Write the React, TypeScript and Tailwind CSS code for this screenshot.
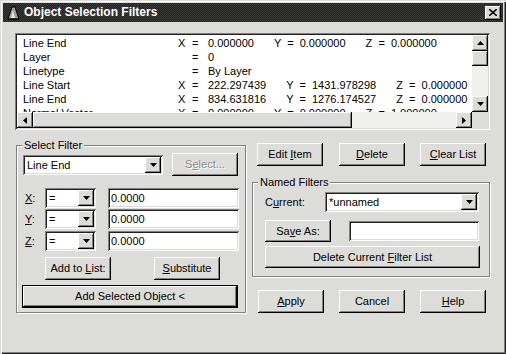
import type { ReactNode } from "react";

const raised =
  "bg-[#dcdcd8] shadow-[inset_-1px_-1px_0_#000,inset_1px_1px_0_#fff,inset_-2px_-2px_0_#808080]";
const sunken =
  "bg-white shadow-[inset_1px_1px_0_#808080,inset_-1px_-1px_0_#fff,inset_2px_2px_0_#202020,inset_-2px_-2px_0_#dcdcd8]";

interface Row {
  label: string;
  x?: string;
  v?: string;
  y?: string;
  z?: string;
}

const rows: Row[] = [
  { label: "Line End", x: "0.000000", y: "0.000000", z: "0.000000" },
  { label: "Layer", v: "0" },
  { label: "Linetype", v: "By Layer" },
  { label: "Line Start", x: "222.297439", y: "1431.978298", z: "0.000000" },
  { label: "Line End", x: "834.631816", y: "1276.174527", z: "0.000000" },
  { label: "Normal Vector", x: "0.000000", y: "0.000000", z: "1.000000" },
];

function Btn({ children, className = "" }: { children: ReactNode; className?: string }) {
  return (
    <div className={`flex items-center justify-center ${raised} ${className}`}>
      {children}
    </div>
  );
}

function Arrow({ dir }: { dir: "up" | "down" | "left" | "right" }) {
  const pts = {
    up: "0,4 7,4 3.5,0",
    down: "0,0 7,0 3.5,4",
    left: "4,0 4,7 0,3.5",
    right: "0,0 0,7 4,3.5",
  }[dir];
  const w = dir === "up" || dir === "down" ? 7 : 4;
  const h = dir === "up" || dir === "down" ? 4 : 7;
  return (
    <svg width={w} height={h} viewBox={`0 0 ${w} ${h}`}>
      <polygon points={pts} fill="#000" />
    </svg>
  );
}

function ArrowBtn({ dir }: { dir: "up" | "down" | "left" | "right" }) {
  return (
    <Btn className="w-[16px] h-[16px] shrink-0">
      <Arrow dir={dir} />
    </Btn>
  );
}

function Combo({ value, className = "" }: { value: string; className?: string }) {
  return (
    <div className={`flex items-center p-[2px] h-[20px] ${sunken} ${className}`}>
      <span className="flex-1 pl-[2px] leading-[16px]">{value}</span>
      <ArrowBtn dir="down" />
    </div>
  );
}

function Field({ value = "", className = "" }: { value?: string; className?: string }) {
  return (
    <div className={`flex items-center h-[20px] px-[3px] ${sunken} ${className}`}>
      {value}
    </div>
  );
}

function Group({ title, children, className = "" }: { title: string; children: ReactNode; className?: string }) {
  return (
    <div
      className={`relative border border-[#808080] shadow-[inset_1px_1px_0_#fff,1px_1px_0_#fff] ${className}`}
    >
      <span className="absolute -top-[8px] left-[5px] px-[2px] bg-[#dcdcd8] leading-[14px]">
        {title}
      </span>
      {children}
    </div>
  );
}

function ListBox() {
  return (
    <div className={`flex w-[475px] h-[97px] p-[2px] ${sunken}`}>
      <div className="flex flex-col flex-1 min-w-0">
        <div className="flex-1 overflow-hidden pl-[6px] pt-[1px]">
          {rows.map((r, i) => (
            <div key={i} className="flex h-[14px] items-center whitespace-pre leading-[14px]">
              <span className="w-[155px] shrink-0">{r.label}</span>
              <span className="w-[14px] shrink-0">{r.x ? "X" : ""}</span>
              <span className="w-[16px] shrink-0">=</span>
              <span>{r.x ?? r.v}</span>
              {r.y && <span className="ml-[20px]">{"Y  =  " + r.y}</span>}
              {r.z && <span className="ml-[20px]">{"Z  =  " + r.z}</span>}
            </div>
          ))}
        </div>
        <div className="flex h-[16px]">
          <ArrowBtn dir="left" />
          <div className={`w-[319px] h-[16px] ${raised}`} />
          <div className="flex-1 bg-[#efefec]" />
          <ArrowBtn dir="right" />
        </div>
      </div>
      <div className="flex flex-col w-[16px]">
        <ArrowBtn dir="up" />
        <div className={`h-[15px] ${raised}`} />
        <div className="flex-1 bg-[#efefec]" />
        <ArrowBtn dir="down" />
        <div className="h-[16px] bg-[#dcdcd8]" />
      </div>
    </div>
  );
}

export default function App() {
  return (
    <div className="w-[506px] h-[354px] p-[3px] bg-[#dcdcd8] text-[11px] text-black font-['Liberation_Sans',Arial,sans-serif] shadow-[inset_1px_1px_0_#dcdcd8,inset_2px_2px_0_#fff,inset_-1px_-1px_0_#202020,inset_-2px_-2px_0_#808080]">
      {/* Title bar */}
      <div className="flex items-center h-[19px] bg-[#2c2c2c] bg-[repeating-conic-gradient(#242424_0_25%,#3a3a3a_0_50%)] bg-[length:2px_2px]">
        <svg width="14" height="14" viewBox="0 0 14 14" className="ml-[3px]">
          <polygon points="2,13 6,1 9,1 13,13" fill="#9a9a96" stroke="#000" strokeWidth="1" />
          <polygon points="5,12 7,4 9,12" fill="#e8e8e4" />
          <line x1="3" y1="13" x2="13" y2="13" stroke="#000" />
        </svg>
        <span className="ml-[4px] text-white font-bold text-[12px] leading-[19px]">
          Object Selection Filters
        </span>
        <Btn className="ml-auto mr-[2px] w-[16px] h-[14px]">
          <svg width="8" height="7" viewBox="0 0 8 7">
            <path d="M0 0 L8 7 M8 0 L0 7" stroke="#000" strokeWidth="1.6" />
          </svg>
        </Btn>
      </div>

      <div className="ml-[12px] mt-[11px]">
        <ListBox />
      </div>

      <div className="flex items-start">
        {/* Left: Select Filter */}
        <Group title="Select Filter" className="ml-[13px] mt-[15px] w-[230px] h-[168px] pt-[7px] pl-[6px]">
          <div className="flex items-center h-[23px]">
            <Combo value="Line End" className="w-[140px]" />
            <Btn className="ml-[9px] w-[66px] h-[23px] text-[#8a8a88] text-shadow-[1px_1px_0_#fff]">
              <span>
                S<u className="underline">e</u>lect...
              </span>
            </Btn>
          </div>
          <div className="mt-[12px] flex items-center h-[20px]">
            <span className="w-[22px] pl-[2px]">
              <u className="underline">X</u>:
            </span>
            <Combo value="=" className="w-[51px]" />
            <Field value="0.0000" className="ml-[12px] w-[131px]" />
          </div>
          <div className="mt-[1px] flex items-center h-[20px]">
            <span className="w-[22px] pl-[2px]">
              <u className="underline">Y</u>:
            </span>
            <Combo value="=" className="w-[51px]" />
            <Field value="0.0000" className="ml-[12px] w-[131px]" />
          </div>
          <div className="mt-[2px] flex items-center h-[20px]">
            <span className="w-[22px] pl-[2px]">
              <u className="underline">Z</u>:
            </span>
            <Combo value="=" className="w-[51px]" />
            <Field value="0.0000" className="ml-[12px] w-[131px]" />
          </div>
          <div className="mt-[6px] flex h-[23px]">
            <Btn className="ml-[22px] w-[66px] h-[23px]">
              <span>
                Add to <u className="underline">L</u>ist:
              </span>
            </Btn>
            <Btn className="ml-[43px] w-[66px] h-[23px]">
              <span>
                <u className="underline">S</u>ubstitute
              </span>
            </Btn>
          </div>
          <Btn className="mt-[5px] -ml-[1px] w-[216px] h-[23px] border border-black">
            Add Selected Object &lt;
          </Btn>
        </Group>

        {/* Right column */}
        <div className="ml-[6px] mt-[13px] w-[238px]">
          <div className="flex pl-[5px]">
            <Btn className="w-[66px] h-[23px]">
              <span>
                Edit <u className="underline">I</u>tem
              </span>
            </Btn>
            <Btn className="ml-[16px] w-[66px] h-[23px]">
              <span>
                <u className="underline">D</u>elete
              </span>
            </Btn>
            <Btn className="ml-[15px] w-[66px] h-[23px]">
              <span>
                <u className="underline">C</u>lear List
              </span>
            </Btn>
          </div>

          <Group title="Named Filters" className="mt-[16px] w-[238px] h-[95px] pt-[9px] pl-[12px]">
            <div className="flex items-center h-[20px]">
              <span className="w-[60px]">
                C<u className="underline">u</u>rrent:
              </span>
              <Combo value="*unnamed" className="w-[154px]" />
            </div>
            <div className="mt-[8px] flex items-center h-[22px]">
              <Btn className="w-[66px] h-[22px]">
                <span>
                  Sa<u className="underline">v</u>e As:
                </span>
              </Btn>
              <Field className="ml-[18px] w-[130px]" />
            </div>
            <Btn className="mt-[4px] w-[215px] h-[22px]">
              <span>
                Delete Current <u className="underline">F</u>ilter List
              </span>
            </Btn>
          </Group>

          <div className="mt-[13px] flex pl-[6px]">
            <Btn className="w-[66px] h-[23px]">
              <span>
                <u className="underline">A</u>pply
              </span>
            </Btn>
            <Btn className="ml-[15px] w-[66px] h-[23px]">Cancel</Btn>
            <Btn className="ml-[15px] w-[66px] h-[23px]">
              <span>
                <u className="underline">H</u>elp
              </span>
            </Btn>
          </div>
        </div>
      </div>
    </div>
  );
}
